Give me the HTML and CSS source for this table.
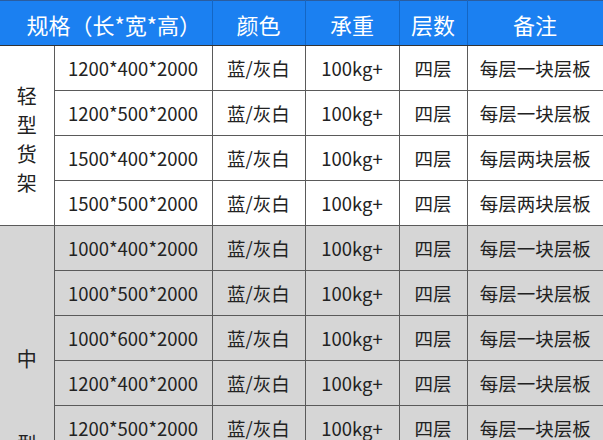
FILE: index.html
```html
<!DOCTYPE html>
<html lang="zh">
<head>
<meta charset="utf-8">
<link rel="stylesheet" href="styles.css">
</head>
<body>
<table class="spec">
  <colgroup>
    <col class="c-group"><col class="c-size"><col class="c-color"><col class="c-load"><col class="c-layer"><col class="c-note">
  </colgroup>
  <thead>
    <tr><th colspan="2" class="h-spec">规格（长*宽*高）</th><th>颜色</th><th>承重</th><th>层数</th><th>备注</th></tr>
  </thead>
  <tbody class="light">
    <tr><td rowspan="4" class="group"><div class="vtext light-v"><span>轻</span><span>型</span><span>货</span><span>架</span></div></td><td>1200*400*2000</td><td>蓝/灰白</td><td>100kg+</td><td>四层</td><td>每层一块层板</td></tr>
    <tr><td>1200*500*2000</td><td>蓝/灰白</td><td>100kg+</td><td>四层</td><td>每层一块层板</td></tr>
    <tr><td>1500*400*2000</td><td>蓝/灰白</td><td>100kg+</td><td>四层</td><td>每层两块层板</td></tr>
    <tr><td>1500*500*2000</td><td>蓝/灰白</td><td>100kg+</td><td>四层</td><td>每层两块层板</td></tr>
  </tbody>
  <tbody class="mid">
    <tr><td rowspan="5" class="group"><div class="vtext mid-v"><span>中</span><span>型</span></div></td><td>1000*400*2000</td><td>蓝/灰白</td><td>100kg+</td><td>四层</td><td>每层一块层板</td></tr>
    <tr><td>1000*500*2000</td><td>蓝/灰白</td><td>100kg+</td><td>四层</td><td>每层一块层板</td></tr>
    <tr><td>1000*600*2000</td><td>蓝/灰白</td><td>100kg+</td><td>四层</td><td>每层一块层板</td></tr>
    <tr><td>1200*400*2000</td><td>蓝/灰白</td><td>100kg+</td><td>四层</td><td>每层一块层板</td></tr>
    <tr><td>1200*500*2000</td><td>蓝/灰白</td><td>100kg+</td><td>四层</td><td>每层一块层板</td></tr>
  </tbody>
</table>
</body>
</html>
```
FILE: styles.css
```css
html, body {
  margin: 0;
  padding: 0;
  background: #ffffff;
  overflow: hidden;
}
body {
  width: 603px;
  height: 440px;
  font-family: "Noto Sans CJK SC", "Noto Sans", sans-serif;
}
.spec {
  width: 603px;
  border-collapse: collapse;
  table-layout: fixed;
  color: #222222;
}
.c-group { width: 54px; }
.c-size { width: 158px; }
.c-color { width: 93px; }
.c-load { width: 94px; }
.c-layer { width: 68px; }
.c-note { width: 136px; }

.spec thead th {
  background: #1b80f1;
  color: #ffffff;
  font-weight: 400;
  font-size: 22px;
  height: 42px;
  padding: 2px 0 0 0;
  border-left: 1px solid #1466c4;
  border-right: 1px solid #1466c4;
  border-top: 1px solid #2a5da0;
  border-bottom: 1px solid #333333;
}
.spec thead th:first-child { border-left: none; }
.spec thead th.h-spec { padding-left: 16px; }
.spec tbody tr { height: 45px; }
.spec tbody td {
  font-size: 18.5px;
  text-align: center;
  padding: 0;
  border: 1px solid #5a5a5a;
  white-space: nowrap;
}
.spec tbody td:first-child { border-left: none; }
.spec tbody td:last-child { border-right: none; }
.mid td { background: #d6d6d6; }

.spec tbody td.group {
  vertical-align: top;
  padding: 0;
}
.vtext {
  display: flex;
  flex-direction: column;
  align-items: center;
  font-size: 20px;
}
.vtext span { display: block; }
.light-v {
  padding-top: 35px;
  line-height: 29px;
}
.mid-v {
  height: 0;
  overflow: visible;
  padding-top: 90px;
  line-height: 85px;
}
```
